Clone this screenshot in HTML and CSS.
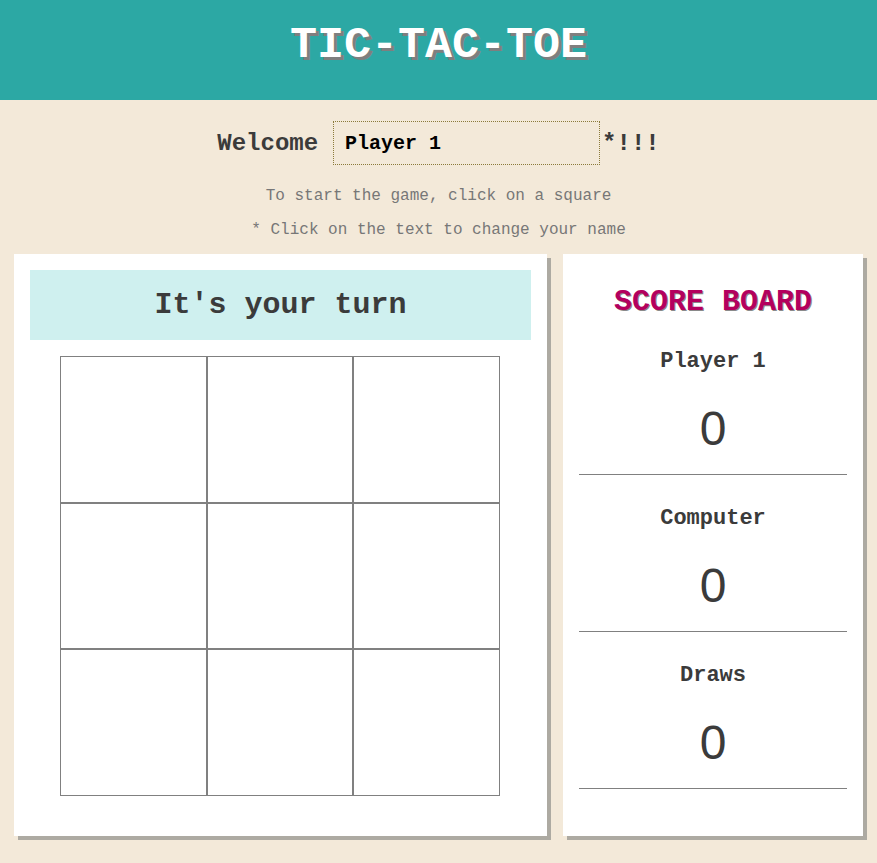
FILE: index.html
```html
<!DOCTYPE html>
<html>
<head>
<meta charset="utf-8">
<title>Tic-Tac-Toe</title>
<link rel="stylesheet" href="styles.css">
</head>
<body>
<header class="top">
  <h1 class="title">TIC-TAC-TOE</h1>
</header>
<section class="intro">
  <div class="welcome">
    <span class="welcome-label">Welcome</span>
    <span class="name-box">Player 1</span>
    <span class="welcome-tail">*!!!</span>
  </div>
  <p class="hint hint-first">To start the game, click on a square</p>
  <p class="hint">* Click on the text to change your name</p>
</section>
<main class="layout">
  <section class="card game">
    <div class="turn">It's your turn</div>
    <div class="board">
      <div class="cell"></div><div class="cell"></div><div class="cell"></div>
      <div class="cell"></div><div class="cell"></div><div class="cell"></div>
      <div class="cell"></div><div class="cell"></div><div class="cell"></div>
    </div>
  </section>
  <aside class="card scores">
    <h2 class="score-title">SCORE BOARD</h2>
    <div class="score">
      <div class="score-name">Player 1</div>
      <div class="score-value">0</div>
    </div>
    <div class="score">
      <div class="score-name">Computer</div>
      <div class="score-value">0</div>
    </div>
    <div class="score">
      <div class="score-name">Draws</div>
      <div class="score-value">0</div>
    </div>
  </aside>
</main>
</body>
</html>
```
FILE: styles.css
```css
* { box-sizing: border-box; }
html, body { margin: 0; padding: 0; }
body {
  background: #f3e9d9;
  font-family: "Liberation Mono", "Courier New", monospace;
  color: #3b3b3b;
  width: 877px;
  height: 863px;
  overflow: hidden;
}
.top {
  background: #2ca8a4;
  height: 100px;
  display: flex;
  align-items: center;
  justify-content: center;
}
.title {
  margin: 0;
  font-size: 45px;
  font-weight: bold;
  color: #ffffff;
  text-shadow: 3px 3px 0 #7f7f7f;
  line-height: 1;
  padding-bottom: 10px;
}
.intro {
  text-align: center;
  padding-top: 21px;
}
.welcome {
  display: flex;
  justify-content: center;
  align-items: center;
  height: 44px;
}
.welcome-label {
  font-size: 24px;
  font-weight: bold;
  margin-right: 15px;
}
.name-box {
  width: 267px;
  height: 44px;
  border: 1px dotted #8b7a3a;
  font-size: 20px;
  font-weight: bold;
  color: #000;
  text-align: left;
  padding-left: 11px;
  display: flex;
  align-items: center;
  margin-right: 2px;
}
.welcome-tail {
  font-size: 24px;
  font-weight: bold;
}
.hint {
  margin: 0;
  font-size: 16px;
  color: #777;
  line-height: 34px;
}
.hint-first { margin-top: 14px; }
.layout {
  display: flex;
  gap: 16px;
  padding: 0 14px;
  margin-top: 7px;
}
.card {
  background: #fff;
  box-shadow: 4px 4px 0 #adaaa2;
  height: 582px;
  padding: 16px;
}
.game { flex: 1; }
.scores { width: 300px; flex: none; }
.turn {
  background: #cff0ef;
  height: 70px;
  display: flex;
  align-items: center;
  justify-content: center;
  font-size: 30px;
  font-weight: bold;
  color: #3b3b3b;
}
.board {
  margin: 16px 0 0 30px;
  width: 440px;
  height: 440px;
  display: grid;
  grid-template-columns: repeat(3, 1fr);
  grid-template-rows: repeat(3, 1fr);
}
.cell {
  border: 1px solid #808080;
}
.score-title {
  margin: 0;
  text-align: center;
  font-size: 30px;
  font-weight: bold;
  color: #b3005e;
  text-shadow: 1px 1px 0 #8a8a8a;
  padding-top: 17px;
  line-height: 31px;
}
.score {
  border-bottom: 1px solid #808080;
  text-align: center;
  height: 157px;
  padding-top: 31px;
}
.score-name {
  font-size: 22px;
  font-weight: bold;
  line-height: 26px;
}
.score-value {
  font-family: "Liberation Sans", Arial, sans-serif;
  font-size: 48px;
  line-height: 56px;
  padding-top: 26px;
}
```
